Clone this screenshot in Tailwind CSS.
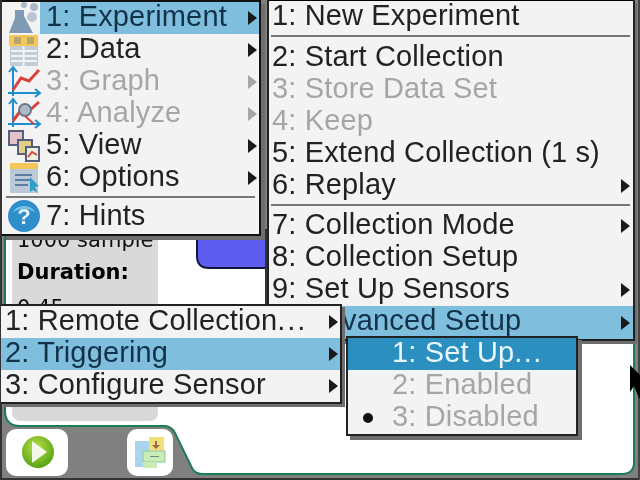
<!DOCTYPE html>
<html lang="en">
<head>
    <meta charset="UTF-8">
    <title>Vernier DataQuest menus</title>
    <script src="https://cdn.jsdelivr.net/npm/@tailwindcss/browser@4"></script>
</head>
<body class="bg-[#808080]">
<div class="relative w-[640px] h-[480px] overflow-hidden bg-[#808080] font-['Liberation_Sans',sans-serif] text-[29px] leading-[28px] tracking-[0.15px] text-[#222] blur-[0.4px]">

    <!-- Work area behind the menus -->
    <svg class="absolute left-0 top-0" width="640" height="480" viewBox="0 0 640 480">
        <path d="M5 230 V412 Q6 426 20 426 H166 Q172 427 175 433 L192 468 Q195 474 202 474 H622 Q634 474 634 462 V230 Z" fill="#fff" stroke="#1c7d55" stroke-width="2"/>
        <rect x="12" y="230" width="146" height="191" rx="8" fill="#d9d9d9"/>
        <path d="M197 230 V256 Q197 268 209 268 H266 V230 Z" fill="#5d5df0" stroke="#15153c" stroke-width="2"/>
        <rect x="265" y="230" width="2" height="80" fill="#333"/>
        <rect x="0" y="478" width="640" height="2" fill="#333"/>
        <rect x="0" y="0" width="2" height="480" fill="#333"/>
        <rect x="638" y="0" width="2" height="480" fill="#444"/>
        <rect x="6" y="429" width="62" height="47" rx="10" fill="#fff"/>
        <rect x="127" y="429" width="46" height="47" rx="10" fill="#fff"/>
        <defs>
            <radialGradient id="play" cx="45%" cy="35%" r="70%">
                <stop offset="0" stop-color="#b8e04a"/><stop offset="1" stop-color="#4f9e10"/>
            </radialGradient>
        </defs>
        <circle cx="38" cy="452" r="16" fill="url(#play)"/>
        <path d="M32 441 L47 452 L32 463 Z" fill="#f4f8e8"/>
        <rect x="135" y="441" width="22" height="26" fill="#a8d4ec"/>
        <rect x="149" y="437" width="15" height="19" fill="#f2df7c"/>
        <path d="M155 441 h2 v4 h3 l-4 4 l-4 -4 h3 Z" fill="#9a6a4a"/>
        <rect x="143" y="451" width="22" height="11" fill="#c9ecb6" stroke="#8cc5a0"/>
        <rect x="150" y="456" width="9" height="1" fill="#6b8f80"/>
        <rect x="143" y="462" width="14" height="6" fill="#c9ecb6"/>
        <path d="M630 365 L630 392 L634 386 L639 398 L640 398 L640 375 Z" fill="#000"/>
    </svg>

    <div class="absolute left-[17px] top-[230px] w-[136px] h-[74px] overflow-hidden text-[#111] font-['DejaVu_Sans',sans-serif] text-[21px] leading-[24px] tracking-normal">
        <p class="-mt-[2px] whitespace-nowrap">1000 sample</p>
        <p class="mt-[8px] font-bold text-[#000]">Duration:</p>
        <p class="mt-[12px]">0.45</p>
    </div>

    <!-- Main menu -->
    <div class="absolute left-[2px] top-0 w-[259px] h-[236px] bg-[#f3f3f3] border-r-2 border-b-2 border-[#111] shadow-[4px_4px_0_#6e6e6e]">
        <div class="h-[2px] bg-[#111]"></div>
        <div class="flex items-start h-[32px] ml-[38px] pl-[6px] pr-[2px] bg-[#7fbfdd] text-[#12324a]">
            <span class="flex-1">1: Experiment</span>
            <svg class="self-center" width="9" height="14" viewBox="0 0 9 14"><path d="M0 0 L9 7 L0 14 Z" fill="#1a1a1a"/></svg>
        </div>
        <div class="flex items-start h-[32px] pl-[44px] pr-[2px]">
            <span class="flex-1">2: Data</span>
            <svg class="self-center" width="9" height="14" viewBox="0 0 9 14"><path d="M0 0 L9 7 L0 14 Z" fill="#1a1a1a"/></svg>
        </div>
        <div class="flex items-start h-[32px] pl-[44px] pr-[2px] text-[#a6a6a6]">
            <span class="flex-1">3: Graph</span>
            <svg class="self-center" width="9" height="14" viewBox="0 0 9 14"><path d="M0 0 L9 7 L0 14 Z" fill="#a6a6a6"/></svg>
        </div>
        <div class="flex items-start h-[32px] pl-[44px] pr-[2px] text-[#a6a6a6]">
            <span class="flex-1">4: Analyze</span>
            <svg class="self-center" width="9" height="14" viewBox="0 0 9 14"><path d="M0 0 L9 7 L0 14 Z" fill="#a6a6a6"/></svg>
        </div>
        <div class="flex items-start h-[32px] pl-[44px] pr-[2px]">
            <span class="flex-1">5: View</span>
            <svg class="self-center" width="9" height="14" viewBox="0 0 9 14"><path d="M0 0 L9 7 L0 14 Z" fill="#1a1a1a"/></svg>
        </div>
        <div class="flex items-start h-[32px] pl-[44px] pr-[2px]">
            <span class="flex-1">6: Options</span>
            <svg class="self-center" width="9" height="14" viewBox="0 0 9 14"><path d="M0 0 L9 7 L0 14 Z" fill="#1a1a1a"/></svg>
        </div>
        <div class="mx-[4px] mt-[2px] mb-[3px] h-[2px] bg-[#777]"></div>
        <div class="h-[32px] pl-[44px]">7: Hints</div>

        <!-- Menu icons -->
        <svg class="absolute left-[2px] top-0" width="38" height="234" viewBox="2 0 38 234">
            <circle cx="22" cy="5" r="3" fill="#a9b9c9"/><circle cx="32" cy="7" r="4" fill="#a9b9c9"/><circle cx="30" cy="17" r="5" fill="#b8c6d3"/>
            <path d="M13 10 H22 V16 L31 33 H7 L13 18 Z" fill="#7f9ab3"/>
            <rect x="7" y="35" width="29" height="11" fill="#f5c757"/>
            <rect x="12" y="37" width="7" height="7" fill="#b8a76a"/><rect x="25" y="37" width="7" height="7" fill="#b8a76a"/>
            <rect x="8" y="46" width="28" height="20" fill="#c2cdd8"/>
            <path d="M9 51 H35 M9 56 H35 M9 61 H35" stroke="#f3f3f3" stroke-width="2"/><path d="M21.5 46 V66" stroke="#f3f3f3" stroke-width="2"/>
            <path d="M11 68 V96 M6 93 H37 M7 72 L11 67 L15 72 M33 89 L38 93 L33 97" fill="none" stroke="#1b8fd0" stroke-width="2"/>
            <path d="M11 90 L19 78 L27 81 L37 70" fill="none" stroke="#d9413a" stroke-width="3"/>
            <path d="M11 100 V127 M6 124 H37 M7 104 L11 99 L15 104 M33 120 L38 124 L33 128" fill="none" stroke="#1b8fd0" stroke-width="2"/>
            <path d="M11 121 L19 110 M28 110 L37 102" fill="none" stroke="#d9413a" stroke-width="3"/>
            <circle cx="23" cy="110" r="6" fill="#aeb9c6" stroke="#64788f" stroke-width="2"/>
            <path d="M23 116 L32 124" stroke="#d9413a" stroke-width="2"/>
            <rect x="7" y="131" width="14" height="14" fill="#e3c3c8" stroke="#55607a" stroke-width="2"/>
            <rect x="16" y="140" width="14" height="14" fill="#e2cf88" stroke="#55607a" stroke-width="2"/>
            <rect x="24" y="147" width="13" height="14" fill="#eed" stroke="#55607a" stroke-width="2"/>
            <path d="M26 157 L30 152 L35 155" fill="none" stroke="#d9413a" stroke-width="2"/>
            <rect x="8" y="163" width="28" height="6" fill="#f5c757"/>
            <rect x="8" y="169" width="28" height="24" fill="#bccad8"/>
            <path d="M13 175 H30 M13 180 H30 M13 185 H26" stroke="#5b7fa0" stroke-width="2"/>
            <path d="M28 177 L37 186 L33 187 L36 193 L31 190 L28 192 Z" fill="#2f9fc9"/>
            <circle cx="22" cy="216" r="16" fill="#2f8fcb"/>
            <path d="M11 212 A12 10 0 0 1 33 212 Q22 205 11 212 Z" fill="#7cc4ea"/>
            <text x="22" y="224" text-anchor="middle" font-family="Liberation Sans" font-weight="bold" font-size="22" fill="#e8f4fb">?</text>
        </svg>
    </div>

    <!-- Experiment submenu -->
    <div class="absolute left-[267px] top-0 w-[368px] h-[341px] bg-[#f3f3f3] border-l-2 border-r-2 border-b-2 border-[#222] pl-[3px] shadow-[2px_3px_0_#6e6e6e]">
        <div class="h-px -ml-[3px] bg-black"></div>
        <div class="h-[31px]">1: New Experiment</div>
        <div class="-ml-[1px] mr-[3px] my-[3px] h-[2px] bg-[#777]"></div>
        <div class="h-[32px] mt-[5px]">2: Start Collection</div>
        <div class="h-[32px] text-[#a6a6a6]">3: Store Data Set</div>
        <div class="h-[32px] text-[#a6a6a6]">4: Keep</div>
        <div class="h-[32px]">5: Extend Collection (1 s)</div>
        <div class="flex items-start h-[32px] pr-[3px]">
            <span class="flex-1">6: Replay</span>
            <svg class="self-center" width="9" height="14" viewBox="0 0 9 14"><path d="M0 0 L9 7 L0 14 Z" fill="#1a1a1a"/></svg>
        </div>
        <div class="-ml-[1px] mr-[3px] mt-[2px] mb-[4px] h-[2px] bg-[#777]"></div>
        <div class="flex items-start h-[32px] pr-[3px]">
            <span class="flex-1">7: Collection Mode</span>
            <svg class="self-center" width="9" height="14" viewBox="0 0 9 14"><path d="M0 0 L9 7 L0 14 Z" fill="#1a1a1a"/></svg>
        </div>
        <div class="h-[32px]">8: Collection Setup</div>
        <div class="flex items-start h-[32px] pr-[3px]">
            <span class="flex-1">9: Set Up Sensors</span>
            <svg class="self-center" width="9" height="14" viewBox="0 0 9 14"><path d="M0 0 L9 7 L0 14 Z" fill="#1a1a1a"/></svg>
        </div>
        <div class="flex items-start h-[33px] -ml-[3px] pl-[3px] pr-[3px] bg-[#7fbfdd] text-[#12324a]">
            <span class="flex-1">A: Advanced Setup</span>
            <svg class="self-center" width="9" height="14" viewBox="0 0 9 14"><path d="M0 0 L9 7 L0 14 Z" fill="#1a1a1a"/></svg>
        </div>
    </div>

    <!-- Advanced Setup submenu -->
    <div class="absolute left-[1px] top-[304px] w-[341px] h-[100px] bg-[#f3f3f3] border-2 border-l-0 border-[#222] shadow-[3px_3px_0_#6e6e6e]">
        <div class="flex items-start h-[32px] pl-[4px] pr-[2px]">
            <span class="flex-1">1: Remote Collection<span class="tracking-[2px]">...</span></span>
            <svg class="self-center" width="9" height="14" viewBox="0 0 9 14"><path d="M0 0 L9 7 L0 14 Z" fill="#1a1a1a"/></svg>
        </div>
        <div class="flex items-start h-[32px] pl-[4px] pr-[2px] bg-[#7fbfdd] text-[#12324a]">
            <span class="flex-1">2: Triggering</span>
            <svg class="self-center" width="9" height="14" viewBox="0 0 9 14"><path d="M0 0 L9 7 L0 14 Z" fill="#1a1a1a"/></svg>
        </div>
        <div class="flex items-start h-[32px] pl-[4px] pr-[2px]">
            <span class="flex-1">3: Configure Sensor</span>
            <svg class="self-center" width="9" height="14" viewBox="0 0 9 14"><path d="M0 0 L9 7 L0 14 Z" fill="#1a1a1a"/></svg>
        </div>
    </div>

    <!-- Triggering submenu -->
    <div class="absolute left-[346px] top-[336px] w-[232px] h-[100px] bg-[#f3f3f3] border-2 border-[#222] shadow-[4px_4px_0_#6e6e6e]">
        <div class="h-[32px] pl-[44px] bg-[#2b8fc0] text-[#eaf6fc]">1: Set Up<span class="tracking-[1.5px]">...</span></div>
        <div class="h-[32px] pl-[44px] text-[#a6a6a6]">2: Enabled</div>
        <div class="relative h-[32px] pl-[44px] text-[#a6a6a6]">
            3: Disabled
            <span class="absolute left-[15px] top-[11px] w-[10px] h-[10px] rounded-full bg-[#111]"></span>
        </div>
    </div>
</div>
</body>
</html>
